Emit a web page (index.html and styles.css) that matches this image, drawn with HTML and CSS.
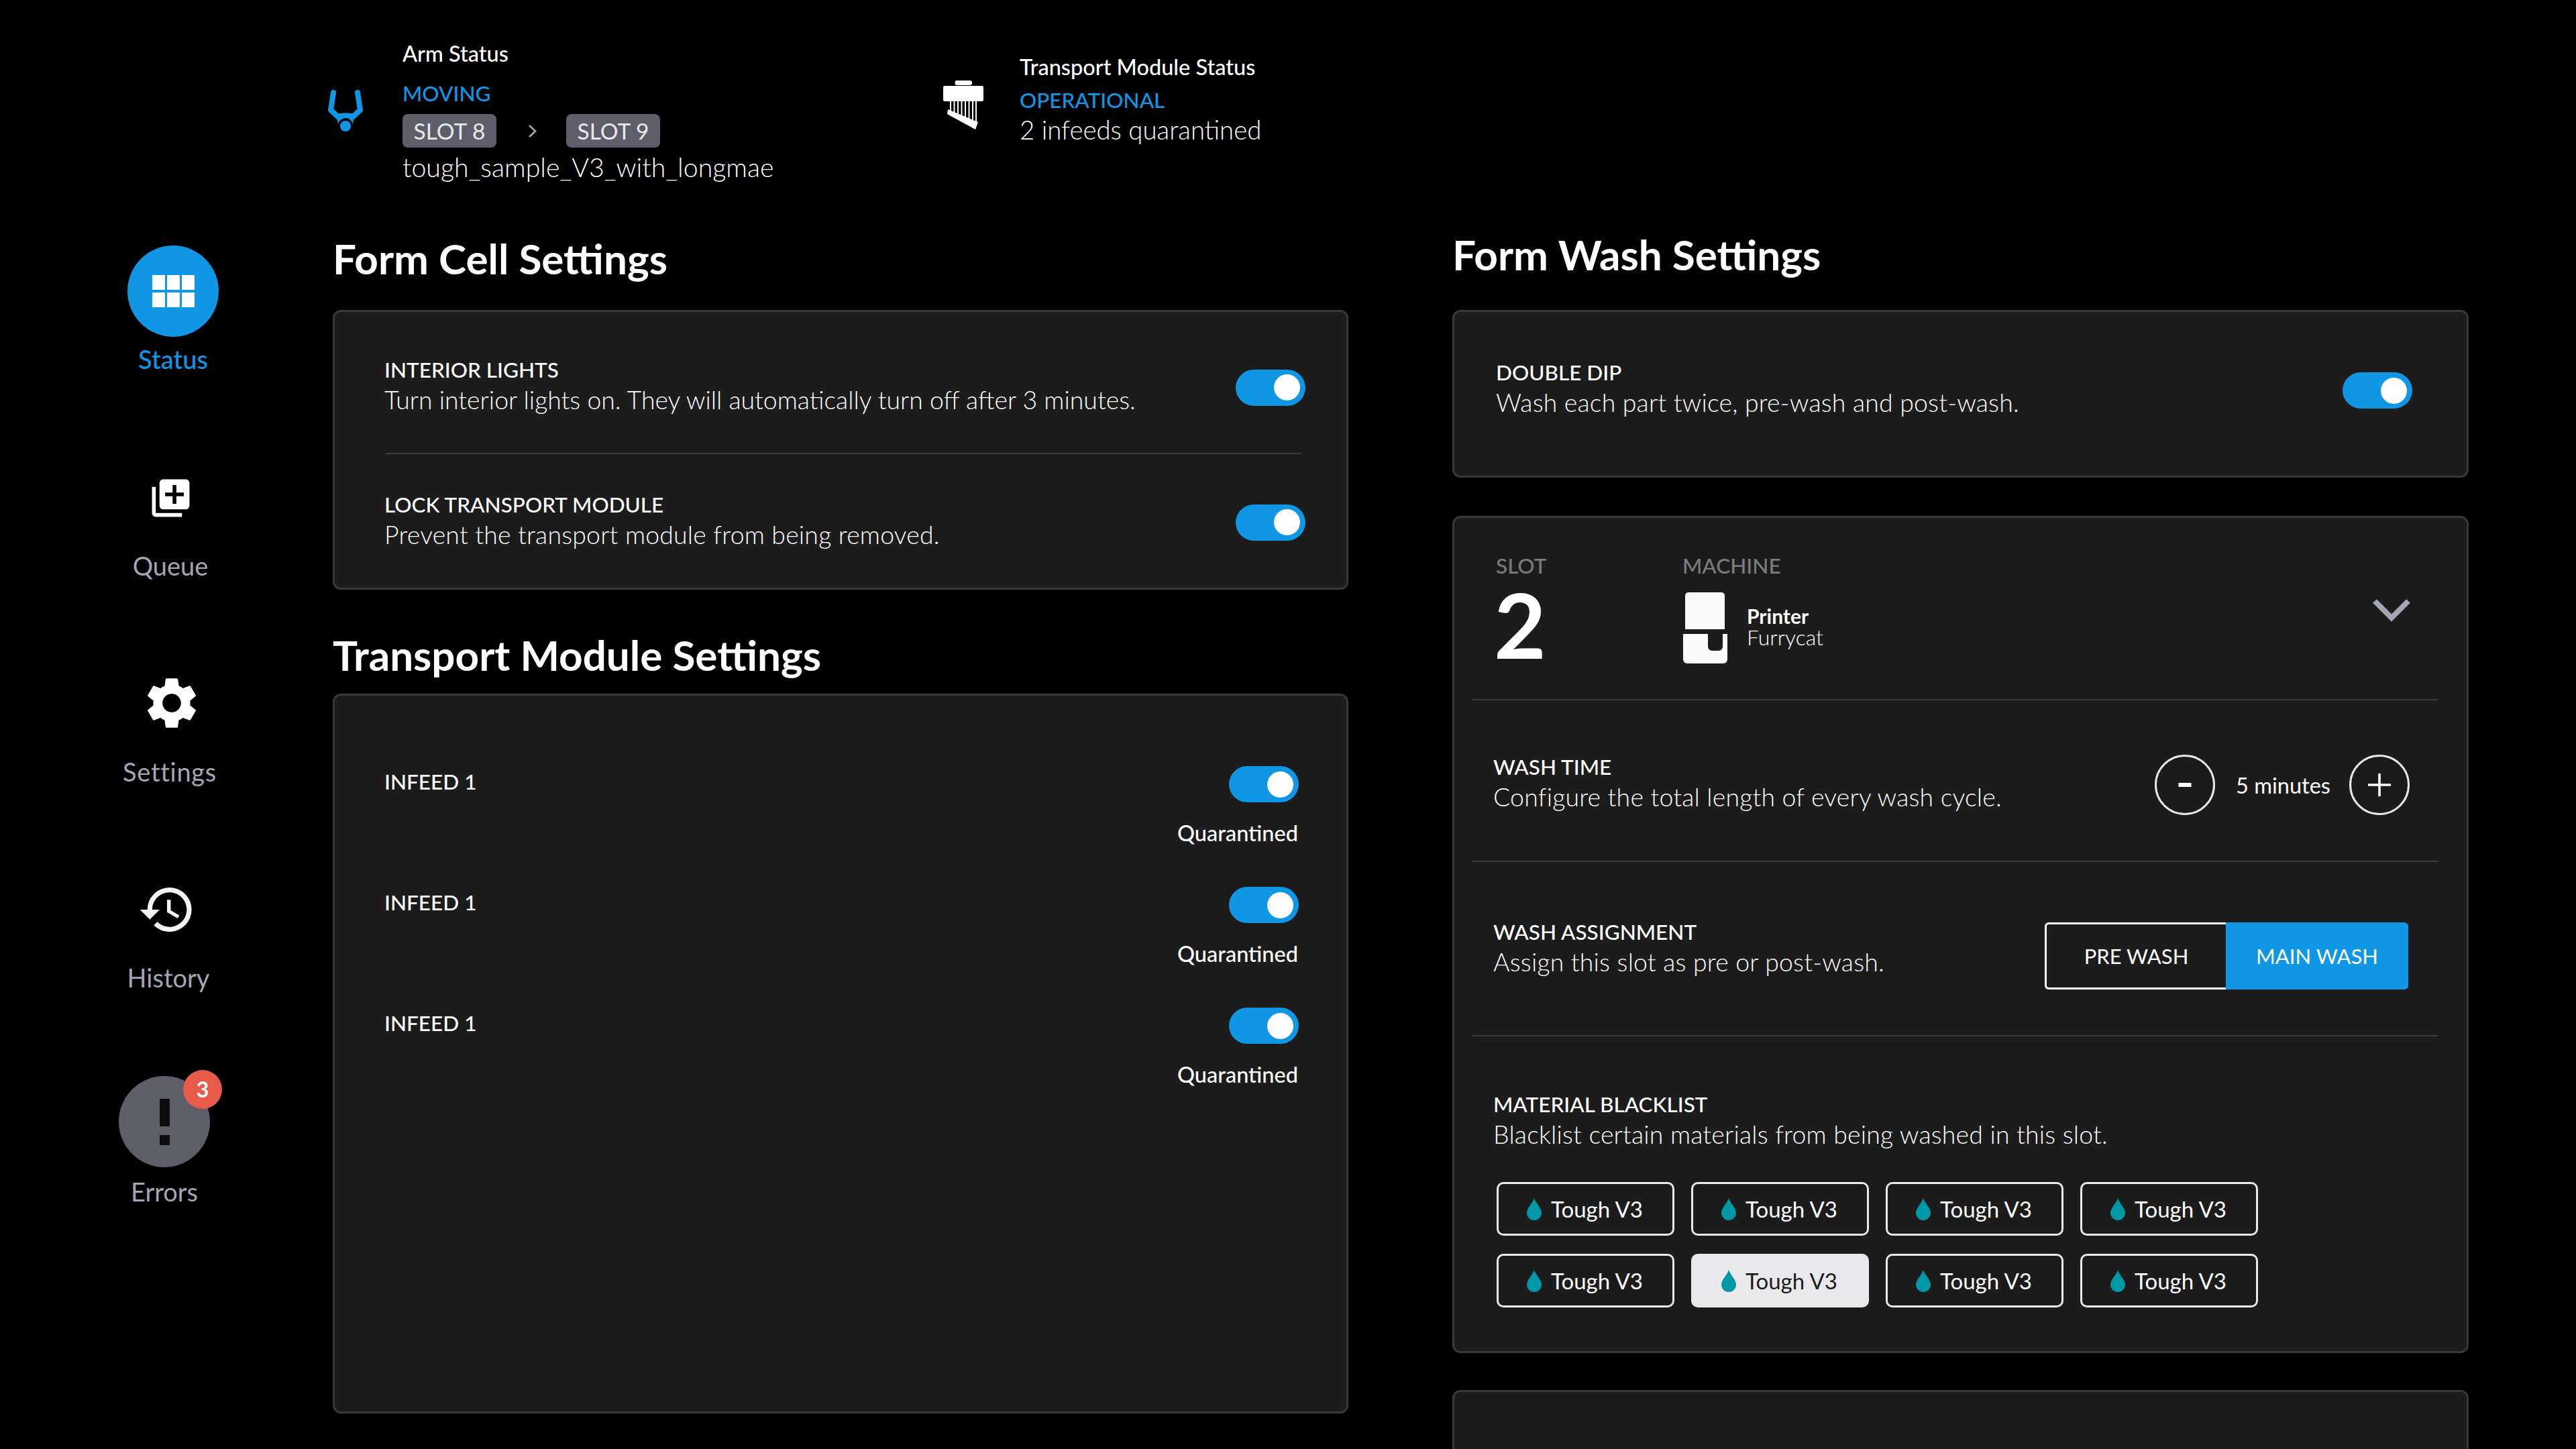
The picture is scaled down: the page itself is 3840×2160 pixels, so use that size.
FILE: index.html
```html
<!DOCTYPE html>
<html lang="en">
<head>
<meta charset="utf-8">
<title>Form Cell Status</title>
<link rel="stylesheet" href="styles.css">
</head>
<body>
<div class="app">
  <nav class="nav">
    <div class="nav-item item-status">
      <div class="round round-active">
        <span class="tiles"><i></i><i></i><i></i><i></i><i></i><i></i></span>
      </div>
      <span class="nav-label nav-label-active">Status</span>
    </div>
    <div class="nav-item item-queue">
      <svg class="ico-queue" viewBox="0 0 24 24"><path fill="#fff" d="M4 6H2v14c0 1.1.9 2 2 2h14v-2H4V6zm16-4H8c-1.1 0-2 .9-2 2v12c0 1.1.9 2 2 2h12c1.1 0 2-.9 2-2V4c0-1.1-.9-2-2-2zm-1 9h-4v4h-2v-4H9V9h4V5h2v4h4v2z"/></svg>
      <span class="nav-label label-queue">Queue</span>
    </div>
    <div class="nav-item item-settings">
      <svg class="ico-gear" viewBox="0 0 24 24"><path fill="#fff" d="M19.14 12.94c.04-.3.06-.61.06-.94 0-.32-.02-.64-.07-.94l2.03-1.58a.49.49 0 0 0 .12-.61l-1.92-3.32a.488.488 0 0 0-.59-.22l-2.39.96c-.5-.38-1.03-.7-1.62-.94l-.36-2.54a.484.484 0 0 0-.48-.41h-3.84c-.24 0-.43.17-.47.41l-.36 2.54c-.59.24-1.13.57-1.62.94l-2.39-.96c-.22-.08-.47 0-.59.22L2.74 8.87c-.12.21-.08.47.12.61l2.03 1.58c-.05.3-.09.63-.09.94s.02.64.07.94l-2.03 1.58a.49.49 0 0 0-.12.61l1.92 3.32c.12.22.37.29.59.22l2.39-.96c.5.38 1.03.7 1.62.94l.36 2.54c.05.24.24.41.48.41h3.84c.24 0 .44-.17.47-.41l.36-2.54c.59-.24 1.13-.56 1.62-.94l2.39.96c.22.08.47 0 .59-.22l1.92-3.32c.12-.22.07-.47-.12-.61l-2.01-1.58zM12 15.6c-1.98 0-3.6-1.62-3.6-3.6s1.62-3.6 3.6-3.6 3.6 1.62 3.6 3.6-1.62 3.6-3.6 3.6z"/></svg>
      <span class="nav-label label-settings">Settings</span>
    </div>
    <div class="nav-item item-history">
      <svg class="ico-history" viewBox="0 0 24 24"><path fill="#f4f4f4" d="M13 3a9 9 0 0 0-9 9H1l3.89 3.89.07.14L9 12H6c0-3.87 3.13-7 7-7s7 3.13 7 7-3.13 7-7 7c-1.93 0-3.68-.79-4.94-2.06l-1.42 1.42A8.954 8.954 0 0 0 13 21a9 9 0 0 0 0-18zm-1 5v5l4.28 2.54.72-1.21-3.5-2.08V8H12z"/></svg>
      <span class="nav-label label-history">History</span>
    </div>
    <div class="nav-item item-errors">
      <div class="round round-muted">
        <svg class="ico-alert" viewBox="0 0 15 69"><rect width="15" height="41" fill="#0d0d0f"/><rect y="54" width="15" height="15" fill="#0d0d0f"/></svg>
        <span class="badge">3</span>
      </div>
      <span class="nav-label label-errors">Errors</span>
    </div>
  </nav>

  <main class="main">
    <header class="status-bar">
      <section class="status status-arm">
        <svg class="ico-arm" viewBox="0 0 54 62">
          <path fill="none" stroke="#0f97e6" stroke-width="8" stroke-linecap="round" stroke-linejoin="round" d="M9 4 5 30 18 42 M45 4 49 30 36 42"/>
          <path fill="#0f97e6" d="M14 36C22 34 32 34 40 36L38 52H16z"/>
          <circle cx="27" cy="53" r="11" fill="#000"/>
          <circle cx="27" cy="54" r="8" fill="#0f97e6"/>
        </svg>
        <div class="status-text">
          <div class="status-title">Arm Status</div>
          <div class="status-state state-moving">MOVING</div>
          <div class="slots">
            <span class="slot-chip">SLOT 8</span>
            <svg class="slot-arrow" viewBox="0 0 13 19"><path fill="none" stroke="#a5a6b3" stroke-width="2.6" d="M2 1l9 8.500-9 8.500"/></svg>
            <span class="slot-chip">SLOT 9</span>
          </div>
          <div class="status-detail detail-arm">tough_sample_V3_with_longmae</div>
        </div>
      </section>
      <section class="status status-transport">
        <svg class="ico-transport" viewBox="0 0 60 73">
          <rect x="17.500" y="0" width="25.500" height="7" rx="3" fill="#fff"/>
          <rect x="0" y="8" width="60" height="23" rx="2" fill="#fff"/>
          <path stroke="#fff" stroke-width="2" d="M11 30V46M16.500 30V50M22 30V53M27.500 30V56M33 30V59M38.500 30V63M44 30V66M49 30V67"/>
          <path fill="#fff" d="M7 43 52 62 48 73 6 50z"/>
        </svg>
        <div class="status-text">
          <div class="status-title">Transport Module Status</div>
          <div class="status-state state-op">OPERATIONAL</div>
          <div class="status-detail detail-op">2 infeeds quarantined</div>
        </div>
      </section>
    </header>

    <div class="columns">
      <div class="col">
        <h2 class="heading heading-cell">Form Cell Settings</h2>
        <div class="card cell-card">
          <div class="setting setting-lights">
            <div class="copy copy-left">
              <div class="label">INTERIOR LIGHTS</div>
              <div class="desc desc-long">Turn interior lights on. They will automatically turn off after 3 minutes.</div>
            </div>
            <span class="toggle toggle-down"></span>
          </div>
          <div class="rule rule-cell"></div>
          <div class="setting setting-lock">
            <div class="copy copy-left">
              <div class="label">LOCK TRANSPORT MODULE</div>
              <div class="desc">Prevent the transport module from being removed.</div>
            </div>
            <span class="toggle toggle-down"></span>
          </div>
        </div>

        <h2 class="heading heading-transport">Transport Module Settings</h2>
        <div class="card transport-card">
          <div class="infeed">
            <div class="label infeed-label">INFEED 1</div>
            <div class="infeed-side"><span class="toggle"></span><span class="note">Quarantined</span></div>
          </div>
          <div class="infeed">
            <div class="label infeed-label">INFEED 1</div>
            <div class="infeed-side"><span class="toggle"></span><span class="note">Quarantined</span></div>
          </div>
          <div class="infeed">
            <div class="label infeed-label">INFEED 1</div>
            <div class="infeed-side"><span class="toggle"></span><span class="note">Quarantined</span></div>
          </div>
        </div>
      </div>

      <div class="col">
        <h2 class="heading heading-wash">Form Wash Settings</h2>
        <div class="card dip-card">
          <div class="setting">
            <div class="copy">
              <div class="label">DOUBLE DIP</div>
              <div class="desc">Wash each part twice, pre-wash and post-wash.</div>
            </div>
            <span class="toggle toggle-dip"></span>
          </div>
        </div>

        <div class="card slot-card">
          <div class="slot-head">
            <div class="slot-col">
              <div class="cap">SLOT</div>
              <div class="slot-num">2</div>
            </div>
            <div class="machine-col">
              <div class="cap">MACHINE</div>
              <div class="machine">
                <svg class="ico-printer" viewBox="0 0 66 106">
                  <path fill="#fafafa" d="M3 5a5 5 0 0 1 5-5h49a5 5 0 0 1 5 5v50H3z"/>
                  <path fill="#fafafa" d="M0 62h37v19a6 6 0 0 0 6 6h10a6 6 0 0 0 6-6V62h7v38a6 6 0 0 1-6 6H6a6 6 0 0 1-6-6z"/>
                </svg>
                <div class="machine-copy">
                  <div class="machine-type">Printer</div>
                  <div class="machine-name">Furrycat</div>
                </div>
              </div>
            </div>
            <svg class="ico-chevron" viewBox="0 0 56 34"><path fill="none" stroke="#a5a6b3" stroke-width="8" d="M3 3 28 28 53 3"/></svg>
          </div>

          <div class="slot-section section-time">
            <div class="copy">
              <div class="label">WASH TIME</div>
              <div class="desc">Configure the total length of every wash cycle.</div>
            </div>
            <div class="stepper">
              <span class="step-btn"><svg class="step-ico" viewBox="0 0 34 34"><rect x="7.500" y="14" width="19" height="6" fill="#fff"/></svg></span>
              <span class="step-value">5 minutes</span>
              <span class="step-btn"><svg class="step-ico" viewBox="0 0 34 34"><path fill="#fff" d="M15.200 0h3.600v15.200H34v3.600H18.800V34h-3.600V18.800H0v-3.600h15.200z"/></svg></span>
            </div>
          </div>

          <div class="slot-section section-assign">
            <div class="copy">
              <div class="label">WASH ASSIGNMENT</div>
              <div class="desc">Assign this slot as pre or post-wash.</div>
            </div>
            <div class="segment">
              <span class="seg seg-off">PRE WASH</span>
              <span class="seg seg-on">MAIN WASH</span>
            </div>
          </div>

          <div class="slot-section section-material">
            <div class="copy">
              <div class="label">MATERIAL BLACKLIST</div>
              <div class="desc">Blacklist certain materials from being washed in this slot.</div>
            </div>
            <div class="chips">
              <span class="chip"><svg class="drop" viewBox="0 0 22 33"><path fill="#0097a7" d="M11 0C13 7 22 15 22 22a11 11 0 0 1-22 0C0 15 9 7 11 0z"/></svg>Tough V3</span>
              <span class="chip"><svg class="drop" viewBox="0 0 22 33"><path fill="#0097a7" d="M11 0C13 7 22 15 22 22a11 11 0 0 1-22 0C0 15 9 7 11 0z"/></svg>Tough V3</span>
              <span class="chip"><svg class="drop" viewBox="0 0 22 33"><path fill="#0097a7" d="M11 0C13 7 22 15 22 22a11 11 0 0 1-22 0C0 15 9 7 11 0z"/></svg>Tough V3</span>
              <span class="chip"><svg class="drop" viewBox="0 0 22 33"><path fill="#0097a7" d="M11 0C13 7 22 15 22 22a11 11 0 0 1-22 0C0 15 9 7 11 0z"/></svg>Tough V3</span>
              <span class="chip"><svg class="drop" viewBox="0 0 22 33"><path fill="#0097a7" d="M11 0C13 7 22 15 22 22a11 11 0 0 1-22 0C0 15 9 7 11 0z"/></svg>Tough V3</span>
              <span class="chip chip-on"><svg class="drop" viewBox="0 0 22 33"><path fill="#0097a7" d="M11 0C13 7 22 15 22 22a11 11 0 0 1-22 0C0 15 9 7 11 0z"/></svg>Tough V3</span>
              <span class="chip"><svg class="drop" viewBox="0 0 22 33"><path fill="#0097a7" d="M11 0C13 7 22 15 22 22a11 11 0 0 1-22 0C0 15 9 7 11 0z"/></svg>Tough V3</span>
              <span class="chip"><svg class="drop" viewBox="0 0 22 33"><path fill="#0097a7" d="M11 0C13 7 22 15 22 22a11 11 0 0 1-22 0C0 15 9 7 11 0z"/></svg>Tough V3</span>
            </div>
          </div>
        </div>

        <div class="card next-card"></div>
      </div>
    </div>
  </main>
</div>
</body>
</html>
```
FILE: styles.css
```css
* { box-sizing: border-box; }
html, body { margin: 0; padding: 0; background: #000; }
body {
  width: 3840px; height: 2160px; overflow: hidden;
  color: #fff;
  font-family: "Lato", "Open Sans", sans-serif;
}
.app { display: flex; width: 3840px; height: 2160px; overflow: hidden; }

/* Navigation rail */
.nav { width: 488px; flex: none; padding-top: 366px; display: flex; flex-direction: column; }
.nav-item { width: 200px; display: flex; flex-direction: column; align-items: center; }
.nav-label { display: block; height: 40px; line-height: 40px; font-size: 38px; font-weight: 400; color: #a5a6b3; white-space: nowrap; }
.nav-label-active { color: #0f97e6; margin-top: 13px; font-weight: 500; }
.item-status { margin-left: 158px; }
.item-queue { margin-left: 154px; margin-top: 154px; }
.item-settings { margin-left: 153px; margin-top: 139px; }
.item-history { margin-left: 151px; margin-top: 142px; }
.item-errors { margin-left: 145px; margin-top: 127px; }
.round { width: 136px; height: 136px; border-radius: 50%; display: flex; align-items: center; justify-content: center; position: relative; flex: none; }
.round-active { background: #0f97e6; }
.round-muted { background: #5e5e6b; }
.tiles { display: grid; grid-template-columns: repeat(3, 19px); grid-auto-rows: 22px; gap: 4px 3px; }
.tiles i { background: #fff; display: block; }
.ico-queue { width: 67px; height: 67px; display: block; }
.label-queue { margin-top: 47px; }
.ico-gear { width: 92px; height: 92px; display: block; margin-left: 5px; }
.label-settings { margin-top: 36px; letter-spacing: 0.7px; }
.ico-history { width: 88px; height: 88px; display: block; margin-right: 5px; }
.label-history { margin-top: 37px; }
.label-errors { margin-top: 16px; }
.ico-alert { width: 15px; height: 69px; display: block; }
.badge {
  position: absolute; left: 96px; top: -9px;
  width: 58px; height: 58px; border-radius: 50%;
  background: #e85a4a; color: #fff;
  font-size: 32px; font-weight: 700; line-height: 58px; text-align: center;
}

/* Main */
.main { flex: 1; min-width: 0; }
.status-bar { height: 340px; padding-top: 60px; display: flex; align-items: flex-start; }
.status { display: flex; align-items: center; }
.status-arm { width: 918px; }
.status-transport { margin-top: 20px; }
.ico-arm { width: 54px; height: 62px; display: block; margin-right: 58px; flex: none; }
.ico-transport { width: 60px; height: 73px; display: block; margin-top: 20px; margin-right: 54px; flex: none; }
.status-title { height: 40px; line-height: 40px; font-size: 32.5px; font-weight: 500; white-space: nowrap; }
.status-state { height: 40px; line-height: 40px; font-size: 31.5px; font-weight: 500; color: #0f97e6; }
.state-moving { margin-top: 19px; }
.state-op { margin-top: 9px; }
.slots { display: flex; align-items: center; margin-top: 11px; }
.slot-chip { width: 140px; height: 50px; border-radius: 8px; background: #5e5e6b; color: #e9e9eb; font-size: 33.5px; line-height: 50px; text-align: center; }
.slot-arrow { width: 13px; height: 19px; display: block; margin: 0 44px 0 47px; }
.status-detail { height: 40px; line-height: 40px; font-size: 39.3px; font-weight: 300; white-space: nowrap; }
.detail-arm { margin-top: 9px; }
.detail-op { margin-top: 4px; font-size: 38.400px; }

.columns { display: grid; grid-template-columns: 1514px 1515px; column-gap: 155px; padding-left: 8px; }
.col { min-width: 0; }
.heading { margin: 0; height: 80px; line-height: 80px; font-size: 62px; font-weight: 700; white-space: nowrap; }
.heading-cell { margin-top: 5px; margin-bottom: 37px; }
.heading-wash { margin-top: -1px; margin-bottom: 43px; }
.heading-transport { margin-top: 57px; margin-bottom: 18px; }

/* Cards */
.card { background: #1c1c1c; border: 3px solid #38383a; border-radius: 12px; }
.copy-left { margin-left: -2px; }
.label { height: 45px; line-height: 45px; font-size: 31.500px; font-weight: 500; white-space: nowrap; }
.desc { height: 45px; line-height: 43px; font-size: 37.400px; font-weight: 300; letter-spacing: 0.2px; white-space: nowrap; }
.desc-long { letter-spacing: 0; }
.setting { display: flex; justify-content: space-between; align-items: center; }
.toggle { display: block; width: 104px; height: 54px; border-radius: 27px; background: #0f97e6; position: relative; flex: none; }
.toggle::after { content: ""; position: absolute; top: 7.500px; right: 8px; width: 39px; height: 39px; border-radius: 50%; background: #fff; }
.toggle-down { margin-top: 7px; }
.toggle-dip { margin-top: 8px; margin-right: 81px; }

.cell-card { height: 417px; padding: 0 61px 0 76px; }
.setting-lights { padding: 64px 0 56px; }
.setting-lock { padding: 53px 0 56px; }
.rule { height: 2px; background: #3c3c3e; }
.rule-cell { margin-right: 6px; }

.transport-card { height: 1073px; padding: 105px 71px 0 76px; }
.infeed { display: flex; justify-content: space-between; align-items: flex-start; margin-bottom: 60px; }
.infeed-label { margin-top: 1px; margin-left: -2px; }
.infeed-side { display: flex; flex-direction: column; align-items: flex-end; }
.note { margin-top: 26px; margin-right: 1px; height: 40px; line-height: 40px; font-size: 32.500px; font-weight: 500; }

.dip-card { height: 250px; padding: 68px 0 0 62px; }
.slot-card { margin-top: 57px; height: 1248px; padding: 0 43px 0 26px; }
.next-card { margin-top: 55px; height: 200px; }

.slot-head { height: 272px; padding: 51px 41px 0 37px; display: flex; align-items: flex-start; border-bottom: 2px solid #3c3c3e; }
.cap { height: 40px; line-height: 40px; font-size: 31.500px; font-weight: 500; color: #7c7c7e; margin-left: -1px; }
.slot-col { width: 278px; flex: none; }
.slot-num { height: 100px; line-height: 96px; font-size: 134px; font-weight: 700; margin-top: 20px; margin-left: -4px; }
.machine { display: flex; align-items: center; margin-top: 20px; }
.ico-printer { width: 66px; height: 106px; display: block; margin-right: 29px; flex: none; }
.machine-copy { margin-top: -4px; }
.machine-type { height: 32px; line-height: 32px; font-size: 30px; font-weight: 700; }
.machine-name { height: 32px; line-height: 32px; font-size: 32px; font-weight: 300; }
.ico-chevron { width: 56px; height: 34px; display: block; margin-left: auto; margin-top: 70px; }

.slot-section { padding-left: 32px; display: flex; justify-content: space-between; align-items: center; border-bottom: 2px solid #3c3c3e; }
.section-time { height: 241px; padding-right: 42px; padding-top: 5px; }
.section-assign { height: 260px; padding-right: 44px; padding-bottom: 5px; }
.section-material { display: block; padding: 79px 0 0 32px; border-bottom: 0; }

.stepper { display: flex; align-items: center; margin-top: 8px; }
.step-btn { width: 90px; height: 90px; border: 3px solid #e9e9eb; border-radius: 50%; display: flex; align-items: center; justify-content: center; }
.step-ico { width: 34px; height: 34px; display: block; }
.step-value { width: 200px; padding-left: 3px; text-align: center; font-size: 32.500px; font-weight: 400; white-space: nowrap; }

.segment { display: flex; width: 542px; height: 100px; margin-top: 26px; }
.seg { display: flex; align-items: center; justify-content: center; font-size: 31px; font-weight: 400; white-space: nowrap; }
.seg-off { width: 270px; border: 3px solid #fff; border-right: 0; border-radius: 6px 0 0 6px; }
.seg-on { width: 272px; background: #0f97e6; border-radius: 0 6px 6px 0; }

.chips { display: grid; grid-template-columns: repeat(4, 265px); grid-auto-rows: 80px; column-gap: 25px; row-gap: 27px; margin: 48px 0 0 5px; }
.chip { display: flex; align-items: center; padding-left: 42px; border: 3px solid #e9e9eb; border-radius: 10px; font-size: 33px; font-weight: 400; white-space: nowrap; }
.chip-on { background: #e9e9eb; color: #1c1c1c; }
.drop { width: 22px; height: 33px; display: block; margin-right: 14px; flex: none; }
```
